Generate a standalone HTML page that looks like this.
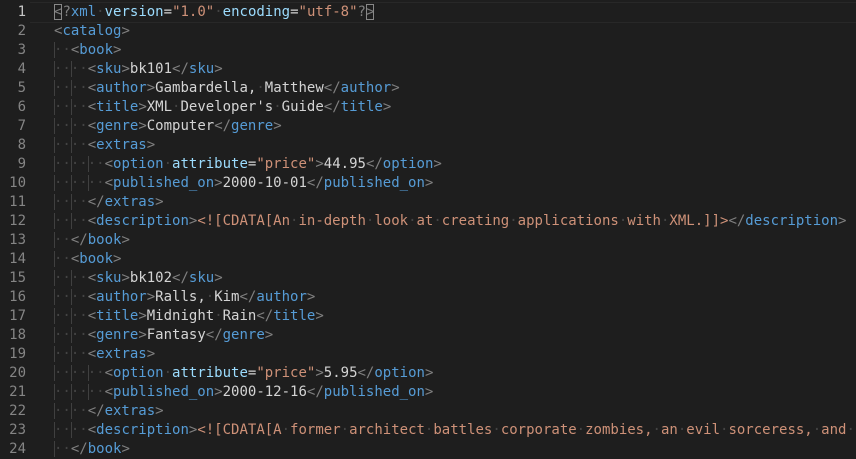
<!DOCTYPE html>
<html><head><meta charset="utf-8"><style>
html,body{margin:0;background:#1e1e1e;width:856px;height:459px;overflow:hidden}
body{font-family:"DejaVu Sans Mono","Liberation Mono",monospace;font-size:14px;}
.ln{position:absolute;left:0;top:3px;width:26px;text-align:right;color:#858585;line-height:19px}
.ln div.a{color:#c6c6c6}
.code{position:absolute;left:54px;top:3px;right:0;line-height:19px;color:#d4d4d4;overflow:hidden}
.code div{white-space:pre;height:19px}
.cur{position:absolute;left:30px;right:0;top:2px;height:21px;border-top:1px solid #282828;border-bottom:1px solid #282828;box-sizing:border-box}
.g{box-shadow:inset 1px 0 0 #404040}
i{font-style:normal;color:#444}
.b{color:#808080}.t{color:#569cd6}.s{color:#ce9178}.at{color:#9cdcfe}.c{color:#ce9178}
.box{outline:1px solid #888;outline-offset:-1px}
</style></head><body>
<div class="cur"></div>
<div class="ln"><div class="a">1</div><div>2</div><div>3</div><div>4</div><div>5</div><div>6</div><div>7</div><div>8</div><div>9</div><div>10</div><div>11</div><div>12</div><div>13</div><div>14</div><div>15</div><div>16</div><div>17</div><div>18</div><div>19</div><div>20</div><div>21</div><div>22</div><div>23</div><div>24</div></div>
<div class="code"><div><span class="b box">&lt;</span><span class="b">?</span><span class="t">xml</span><i>·</i><span class="at">version</span>=<span class="s">"1.0"</span><i>·</i><span class="at">encoding</span>=<span class="s">"utf-8"</span><span class="b">?</span><span class="b box">&gt;</span></div><div><span class="b">&lt;</span><span class="t">catalog</span><span class="b">&gt;</span></div><div><span class="g"><i>··</i></span><span class="b">&lt;</span><span class="t">book</span><span class="b">&gt;</span></div><div><span class="g"><i>··</i></span><span class="g"><i>··</i></span><span class="b">&lt;</span><span class="t">sku</span><span class="b">&gt;</span>bk101<span class="b">&lt;/</span><span class="t">sku</span><span class="b">&gt;</span></div><div><span class="g"><i>··</i></span><span class="g"><i>··</i></span><span class="b">&lt;</span><span class="t">author</span><span class="b">&gt;</span>Gambardella,<i>·</i>Matthew<span class="b">&lt;/</span><span class="t">author</span><span class="b">&gt;</span></div><div><span class="g"><i>··</i></span><span class="g"><i>··</i></span><span class="b">&lt;</span><span class="t">title</span><span class="b">&gt;</span>XML<i>·</i>Developer's<i>·</i>Guide<span class="b">&lt;/</span><span class="t">title</span><span class="b">&gt;</span></div><div><span class="g"><i>··</i></span><span class="g"><i>··</i></span><span class="b">&lt;</span><span class="t">genre</span><span class="b">&gt;</span>Computer<span class="b">&lt;/</span><span class="t">genre</span><span class="b">&gt;</span></div><div><span class="g"><i>··</i></span><span class="g"><i>··</i></span><span class="b">&lt;</span><span class="t">extras</span><span class="b">&gt;</span></div><div><span class="g"><i>··</i></span><span class="g"><i>··</i></span><span class="g"><i>··</i></span><span class="b">&lt;</span><span class="t">option</span><i>·</i><span class="at">attribute</span>=<span class="s">"price"</span><span class="b">&gt;</span>44.95<span class="b">&lt;/</span><span class="t">option</span><span class="b">&gt;</span></div><div><span class="g"><i>··</i></span><span class="g"><i>··</i></span><span class="g"><i>··</i></span><span class="b">&lt;</span><span class="t">published_on</span><span class="b">&gt;</span>2000-10-01<span class="b">&lt;/</span><span class="t">published_on</span><span class="b">&gt;</span></div><div><span class="g"><i>··</i></span><span class="g"><i>··</i></span><span class="b">&lt;/</span><span class="t">extras</span><span class="b">&gt;</span></div><div><span class="g"><i>··</i></span><span class="g"><i>··</i></span><span class="b">&lt;</span><span class="t">description</span><span class="b">&gt;</span><span class="c">&lt;![CDATA[An<i>·</i>in-depth<i>·</i>look<i>·</i>at<i>·</i>creating<i>·</i>applications<i>·</i>with<i>·</i>XML.]]&gt;</span><span class="b">&lt;/</span><span class="t">description</span><span class="b">&gt;</span></div><div><span class="g"><i>··</i></span><span class="b">&lt;/</span><span class="t">book</span><span class="b">&gt;</span></div><div><span class="g"><i>··</i></span><span class="b">&lt;</span><span class="t">book</span><span class="b">&gt;</span></div><div><span class="g"><i>··</i></span><span class="g"><i>··</i></span><span class="b">&lt;</span><span class="t">sku</span><span class="b">&gt;</span>bk102<span class="b">&lt;/</span><span class="t">sku</span><span class="b">&gt;</span></div><div><span class="g"><i>··</i></span><span class="g"><i>··</i></span><span class="b">&lt;</span><span class="t">author</span><span class="b">&gt;</span>Ralls,<i>·</i>Kim<span class="b">&lt;/</span><span class="t">author</span><span class="b">&gt;</span></div><div><span class="g"><i>··</i></span><span class="g"><i>··</i></span><span class="b">&lt;</span><span class="t">title</span><span class="b">&gt;</span>Midnight<i>·</i>Rain<span class="b">&lt;/</span><span class="t">title</span><span class="b">&gt;</span></div><div><span class="g"><i>··</i></span><span class="g"><i>··</i></span><span class="b">&lt;</span><span class="t">genre</span><span class="b">&gt;</span>Fantasy<span class="b">&lt;/</span><span class="t">genre</span><span class="b">&gt;</span></div><div><span class="g"><i>··</i></span><span class="g"><i>··</i></span><span class="b">&lt;</span><span class="t">extras</span><span class="b">&gt;</span></div><div><span class="g"><i>··</i></span><span class="g"><i>··</i></span><span class="g"><i>··</i></span><span class="b">&lt;</span><span class="t">option</span><i>·</i><span class="at">attribute</span>=<span class="s">"price"</span><span class="b">&gt;</span>5.95<span class="b">&lt;/</span><span class="t">option</span><span class="b">&gt;</span></div><div><span class="g"><i>··</i></span><span class="g"><i>··</i></span><span class="g"><i>··</i></span><span class="b">&lt;</span><span class="t">published_on</span><span class="b">&gt;</span>2000-12-16<span class="b">&lt;/</span><span class="t">published_on</span><span class="b">&gt;</span></div><div><span class="g"><i>··</i></span><span class="g"><i>··</i></span><span class="b">&lt;/</span><span class="t">extras</span><span class="b">&gt;</span></div><div><span class="g"><i>··</i></span><span class="g"><i>··</i></span><span class="b">&lt;</span><span class="t">description</span><span class="b">&gt;</span><span class="c">&lt;![CDATA[A<i>·</i>former<i>·</i>architect<i>·</i>battles<i>·</i>corporate<i>·</i>zombies,<i>·</i>an<i>·</i>evil<i>·</i>sorceress,<i>·</i>and<i>·</i>her<i>·</i>own<i>·</i>childhood</span></div><div><span class="g"><i>··</i></span><span class="b">&lt;/</span><span class="t">book</span><span class="b">&gt;</span></div></div>
</body></html>
